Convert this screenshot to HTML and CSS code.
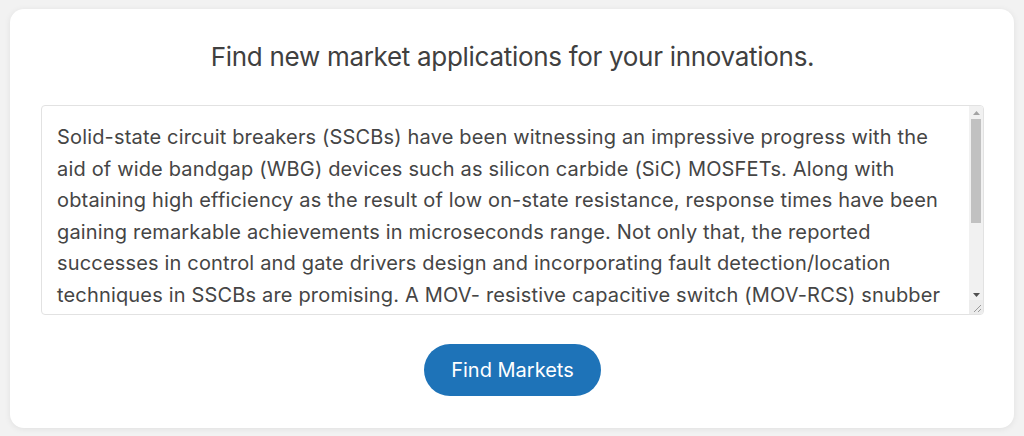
FILE: index.html
```html
<!DOCTYPE html>
<html lang="en">
<head>
<meta charset="utf-8">
<title>Find Markets</title>
<link rel="stylesheet" href="styles.css">
</head>
<body>
<main class="card">
  <h1 class="title">Find new market applications for your innovations.</h1>
  <div class="field">
    <textarea class="abstract">Solid-state circuit breakers (SSCBs) have been witnessing an impressive progress with the aid of wide bandgap (WBG) devices such as silicon carbide (SiC) MOSFETs. Along with obtaining high efficiency as the result of low on-state resistance, response times have been gaining remarkable achievements in microseconds range. Not only that, the reported successes in control and gate drivers design and incorporating fault detection/location techniques in SSCBs are promising. A MOV- resistive capacitive switch (MOV-RCS) snubber circuit is proposed to suppress the voltage overshoot and to damp the oscillations during the turn-off transient of the SSCB. The snubber limits the rate of rise of the voltage across the semiconductor switch and absorbs the energy stored in the line inductance. Simulation and experimental results of a prototype verify the effectiveness of the proposed design.</textarea>
    <div class="scrollbar" aria-hidden="true">
      <span class="arrow up"><svg width="7" height="4" viewBox="0 0 7 4"><path d="M0 4L3.5 0L7 4Z" fill="#a3a3a3"/></svg></span>
      <span class="track"><span class="thumb"></span></span>
      <span class="arrow down"><svg width="7" height="4" viewBox="0 0 7 4"><path d="M0 0L3.5 4L7 0Z" fill="#505050"/></svg></span>
    </div>
    <div class="grip" aria-hidden="true"><svg width="14" height="14" viewBox="0 0 14 14"><path d="M12 5L5 12M12 9L9 12" stroke="#9a9a9a" stroke-width="1"/></svg></div>
  </div>
  <button class="btn" type="button">Find Markets</button>
</main>
</body>
</html>
```
FILE: styles.css
```css
html, body {
  margin: 0;
  padding: 0;
  background: #f2f2f2;
}
body {
  padding: 9px 10px 8px 10px;
  font-family: "Inter", "Noto Sans", sans-serif;
}
.card {
  background: #fff;
  border-radius: 14px;
  box-shadow: 0 1px 6px rgba(0,0,0,0.08);
  height: 419px;
  box-sizing: border-box;
  padding: 26px 30px 0 31px;
  display: flex;
  flex-direction: column;
  align-items: center;
}
.title {
  margin: 0;
  font-size: 26px;
  font-weight: 400;
  color: #404040;
  line-height: 44px;
  letter-spacing: -0.3px;
}
.field {
  position: relative;
  margin-top: 26px;
  align-self: stretch;
  height: 210px;
}
.abstract {
  display: block;
  width: 100%;
  height: 100%;
  margin: 0;
  box-sizing: border-box;
  border: 1px solid #e2e2e2;
  border-radius: 4px;
  padding: 16px 30px 12px 15px;
  font-family: inherit;
  font-size: 20px;
  line-height: 31.6px;
  letter-spacing: 0.17px;
  color: #454545;
  resize: none;
  overflow-y: hidden;
  outline: none;
}
.scrollbar {
  position: absolute;
  top: 1px;
  right: 1px;
  bottom: 14px;
  width: 14px;
  background: #f1f1f1;
  border-top-right-radius: 3px;
  display: flex;
  flex-direction: column;
}
.arrow {
  height: 13px;
  display: flex;
  align-items: center;
  justify-content: center;
  flex: none;
}
.track {
  flex: 1;
  padding: 0 2px;
}
.thumb {
  display: block;
  height: 104px;
  background: #c1c1c1;
}
.grip {
  position: absolute;
  right: 1px;
  bottom: 1px;
  width: 14px;
  height: 14px;
  background: #ececec;
  border-bottom-right-radius: 3px;
}
.grip svg {
  display: block;
}
.btn {
  margin-top: 29px;
  width: 177px;
  height: 52px;
  border: none;
  border-radius: 26px;
  background: #1e73b8;
  color: #fff;
  font-family: inherit;
  font-size: 20px;
  cursor: pointer;
}
```
